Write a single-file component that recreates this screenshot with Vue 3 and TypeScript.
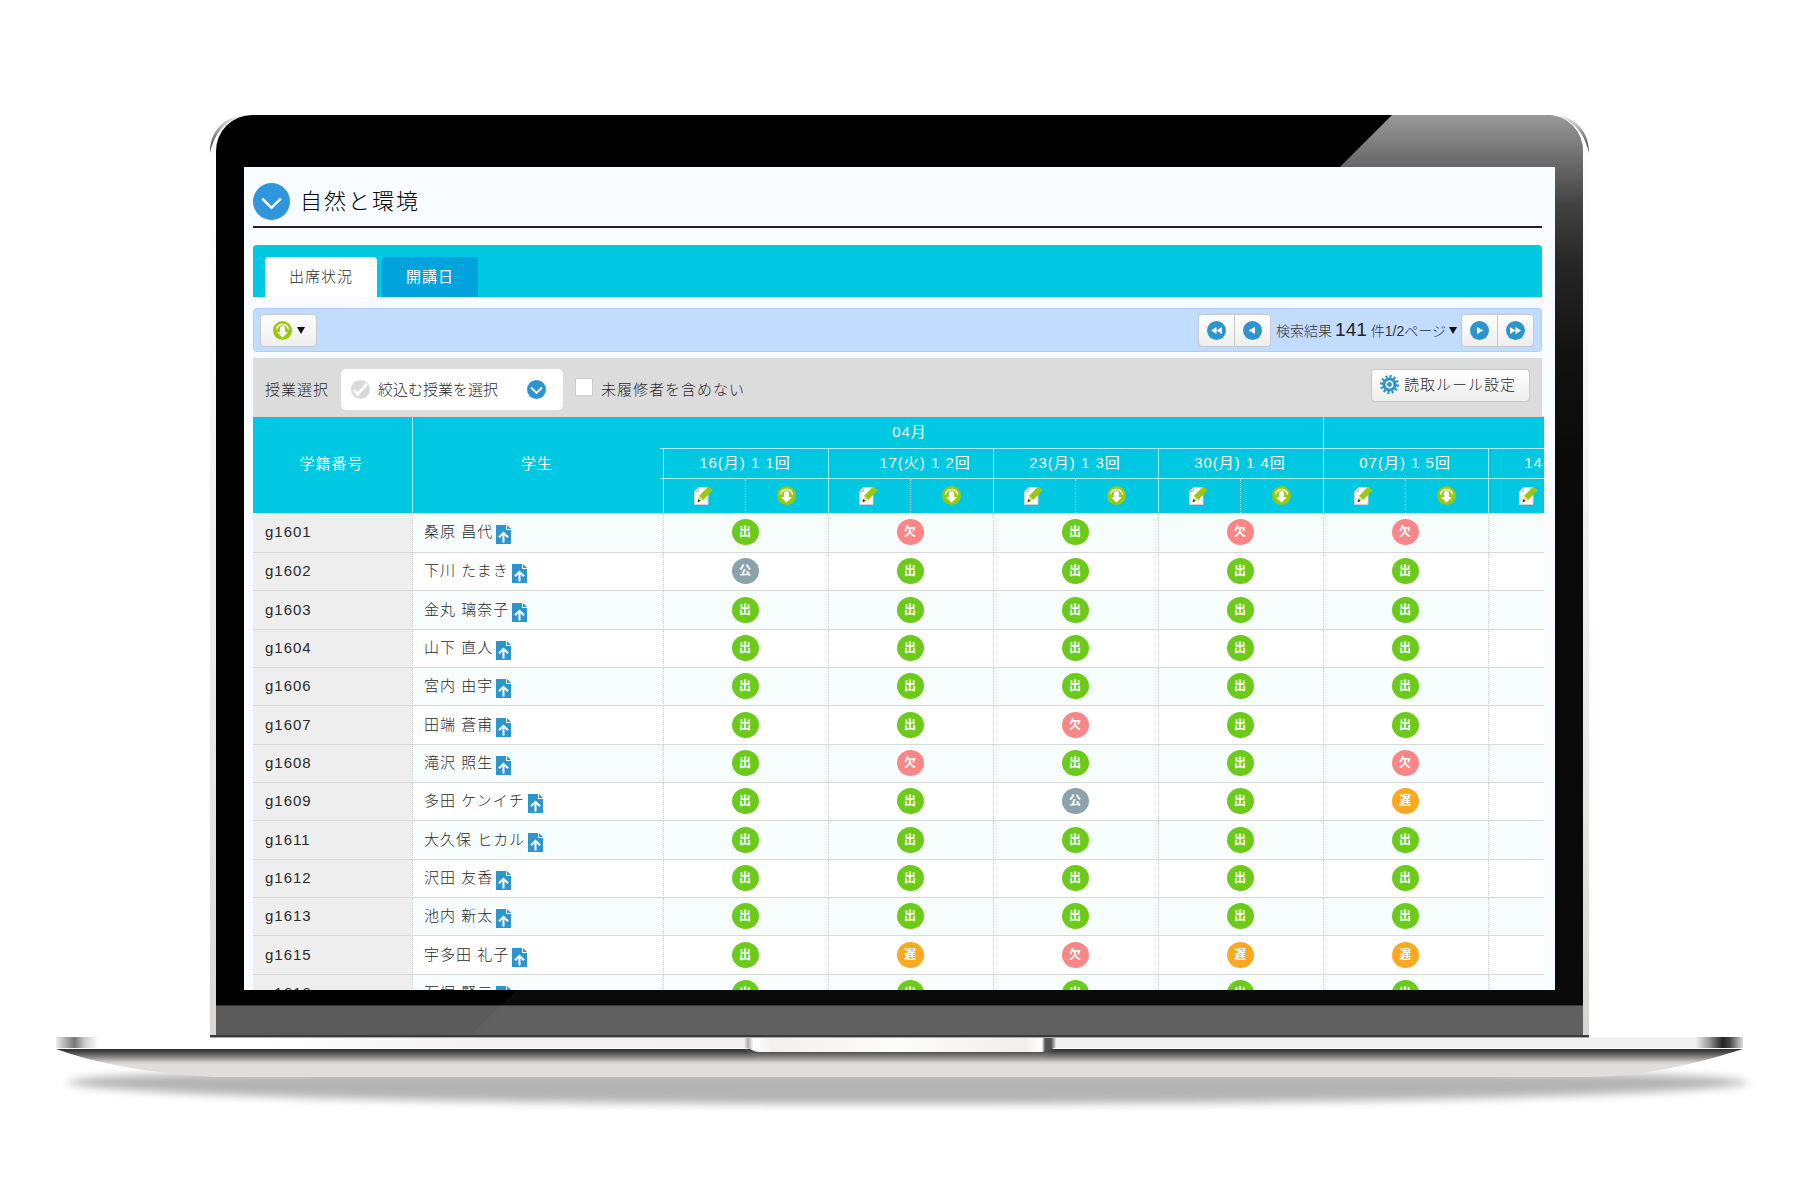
<script setup lang="ts">
type Mark = '出' | '欠' | '公' | '遅'

interface Student {
  id: string
  name: string
  marks: Mark[]
}

interface Session {
  label: string
  shifted?: boolean
}

const sessions: Session[] = [
  { label: '16(月) 1 1回' },
  { label: '17(火) 1 2回', shifted: true },
  { label: '23(月) 1 3回' },
  { label: '30(月) 1 4回' },
  { label: '07(月) 1 5回' },
  { label: '14(月) 1 6回' },
]

const markClass: Record<Mark, string> = {
  出: 'present',
  欠: 'absent',
  公: 'official',
  遅: 'late',
}

const row = (id: string, name: string, marks = '出出出出出'): Student => ({
  id,
  name,
  marks: marks.split('') as Mark[],
})

const students: Student[] = [
  row('g1601', '桑原 昌代', '出欠出欠欠'),
  row('g1602', '下川 たまき', '公出出出出'),
  row('g1603', '金丸 璃奈子'),
  row('g1604', '山下 直人'),
  row('g1606', '宮内 由宇'),
  row('g1607', '田端 蒼甫', '出出欠出出'),
  row('g1608', '滝沢 照生', '出欠出出欠'),
  row('g1609', '多田 ケンイチ', '出出公出遅'),
  row('g1611', '大久保 ヒカル'),
  row('g1612', '沢田 友香'),
  row('g1613', '池内 新太'),
  row('g1615', '宇多田 礼子', '出遅欠遅遅'),
  row('g1616', '石堀 賢二'),
]
</script>

<template>
  <main class="stage">
    <svg class="symbols" aria-hidden="true">
      <symbol id="i-download" viewBox="0 0 19 19">
        <circle cx="9.500" cy="9.500" r="9.500" fill="#98c90f" />
        <path d="M3.400 8.600a6.200 6.200 0 0 1 12.200 0" fill="none" stroke="#fff" stroke-width="1.400" />
        <path d="M6.900 7.600a2.600 2.600 0 0 1 5.200 0v3.600h2.800l-5.400 5.400-5.400-5.400h2.800z" fill="#fff" />
      </symbol>
      <symbol id="i-edit" viewBox="0 0 19 19">
        <path d="M4.500 1.500H14V18.500H.500V5.500z" fill="#fff" stroke="#d5cfcf" />
        <path d="M4.500 1.500v4h-4" fill="#eee" stroke="#c9c4c4" />
        <path d="M14.200.400l4.600 3.800-9.600 9.800-4.100-4.200z" fill="#98c90f" />
        <path d="M5.100 9.800l4.100 4.200-5.400 2.200z" fill="#fbd77a" />
        <path d="M4.400 13l2 2-2.800 1.200z" fill="#222" />
      </symbol>
      <symbol id="i-upload" viewBox="0 0 15 19">
        <path d="M0 0h10v5h5v14H0z" fill="#2d95cd" />
        <path d="M11 0l4 4h-4z" fill="#2d95cd" />
        <path d="M7.500 17.500V8M3 12.300l4.500-4.500 4.500 4.500" fill="none" stroke="#fff" stroke-width="2" />
      </symbol>
      <symbol id="i-chevron" viewBox="0 0 38 38">
        <circle cx="19" cy="19" r="19" fill="currentColor" />
        <path d="M9.500 16l9.500 9.500 9.500-9.500" fill="none" stroke="#fff" stroke-width="2.600" />
      </symbol>
      <symbol id="i-chevron-small" viewBox="0 0 19 19">
        <circle cx="9.500" cy="9.500" r="9.500" fill="#2d95cd" />
        <path d="M4 7.500l5.500 5.500L15 7.500" fill="none" stroke="#fff" stroke-width="1.800" />
      </symbol>
      <symbol id="i-check" viewBox="0 0 19 19">
        <circle cx="9.500" cy="9.500" r="9.500" fill="#d9d9d9" />
        <path d="M3 10.200l4 4 9-10.500" fill="none" stroke="#fff" stroke-width="2.800" />
      </symbol>
      <symbol id="i-prev" viewBox="0 0 19 19">
        <circle cx="9.500" cy="9.500" r="9.500" fill="#2d95cd" />
        <path d="M12 6v7L5.500 9.500z" fill="#fff" />
      </symbol>
      <symbol id="i-first" viewBox="0 0 19 19">
        <circle cx="9.500" cy="9.500" r="9.500" fill="#2d95cd" />
        <path d="M9.500 6v7L4 9.500zM15 6v7L9.500 9.500z" fill="#fff" />
      </symbol>
      <symbol id="i-gear" viewBox="0 0 19 19">
        <circle cx="9.500" cy="9.500" r="8" fill="none" stroke="#2d95cd" stroke-width="3" pathLength="24" stroke-dasharray="1 1" />
        <circle cx="9.500" cy="9.500" r="5.500" fill="none" stroke="#2d95cd" stroke-width="3.200" />
        <circle cx="9.500" cy="9.500" r="2.400" fill="#2d95cd" />
      </symbol>
      <symbol id="i-caret" viewBox="0 0 8 7">
        <path d="M0 0h8L4 7z" fill="#111" />
      </symbol>
    </svg>

    <div class="laptop">
      <div class="lid">
        <svg class="corner" viewBox="0 0 40 40" aria-hidden="true">
          <defs>
            <linearGradient id="edge" x1="0" y1="1" x2="1" y2="0">
              <stop offset="0" stop-color="#333" />
              <stop offset=".5" stop-color="#bbb" />
              <stop offset="1" stop-color="#fff" />
            </linearGradient>
          </defs>
          <path d="M0 38C0 16 14 0 38 0 19 3 5 15 0 38z" fill="url(#edge)" />
        </svg>
        <svg class="corner right" viewBox="0 0 40 40" aria-hidden="true">
          <path d="M0 38C0 16 14 0 38 0 19 3 5 15 0 38z" fill="url(#edge)" />
        </svg>
        <div class="bezel">
          <div class="screen">
            <header class="title">
              <svg class="title-icon"><use href="#i-chevron" /></svg>
              <h1>自然と環境</h1>
            </header>

            <nav class="tabs">
              <a href="#status" class="tab active">出席状況</a>
              <a href="#dates" class="tab">開講日</a>
            </nav>

            <div class="toolbar">
              <button type="button" class="btn menu" aria-label="ダウンロード">
                <svg class="icon"><use href="#i-download" /></svg>
                <svg class="caret"><use href="#i-caret" /></svg>
              </button>
              <div class="pager">
                <div class="pair">
                  <button type="button" class="btn" aria-label="最初"><svg class="icon"><use href="#i-first" /></svg></button>
                  <button type="button" class="btn" aria-label="前"><svg class="icon"><use href="#i-prev" /></svg></button>
                </div>
                <button type="button" class="result">
                  <span>検索結果</span><strong>141</strong><span>件1/2ページ</span>
                  <svg class="caret"><use href="#i-caret" /></svg>
                </button>
                <div class="pair">
                  <button type="button" class="btn" aria-label="次"><svg class="icon flip"><use href="#i-prev" /></svg></button>
                  <button type="button" class="btn" aria-label="最後"><svg class="icon flip"><use href="#i-first" /></svg></button>
                </div>
              </div>
            </div>

            <div class="filters">
              <label for="lesson">授業選択</label>
              <div class="picker">
                <svg class="icon"><use href="#i-check" /></svg>
                <select id="lesson">
                  <option>絞込む授業を選択</option>
                </select>
                <svg class="icon"><use href="#i-chevron-small" /></svg>
              </div>
              <label class="exclude"><input type="checkbox" />未履修者を含めない</label>
              <button type="button" class="btn rules">
                <svg class="icon"><use href="#i-gear" /></svg>読取ルール設定
              </button>
            </div>

            <div class="grid">
              <table>
                <colgroup>
                  <col class="c-id" />
                  <col class="c-name" />
                  <template v-for="s in sessions" :key="s.label">
                    <col class="c-edit" />
                    <col class="c-down" />
                  </template>
                </colgroup>
                <thead>
                  <tr class="months">
                    <th rowspan="3">学籍番号</th>
                    <th rowspan="3">学生</th>
                    <th colspan="8" class="april">04月</th>
                    <th colspan="4"></th>
                  </tr>
                  <tr class="dates">
                    <th v-for="s in sessions" :key="s.label" colspan="2" :class="{ shifted: s.shifted }">{{ s.label }}</th>
                  </tr>
                  <tr class="actions">
                    <template v-for="s in sessions" :key="s.label">
                      <th><button type="button" aria-label="編集"><svg class="icon"><use href="#i-edit" /></svg></button></th>
                      <th class="down"><button type="button" aria-label="ダウンロード"><svg class="icon"><use href="#i-download" /></svg></button></th>
                    </template>
                  </tr>
                </thead>
                <tbody>
                  <tr v-for="s in students" :key="s.id">
                    <td class="id">{{ s.id }}</td>
                    <td class="name">
                      <div><span>{{ s.name }}</span><svg class="upload"><use href="#i-upload" /></svg></div>
                    </td>
                    <td v-for="(m, i) in s.marks" :key="i" colspan="2" class="cell">
                      <span class="mark" :class="markClass[m]">{{ m }}</span>
                    </td>
                    <td colspan="2"></td>
                  </tr>
                </tbody>
              </table>
            </div>
          </div>
          <div class="chin"></div>
        </div>
        <div class="hinge"></div>
      </div>

      <svg class="base" viewBox="0 0 1687 80" aria-hidden="true">
        <defs>
          <linearGradient id="plate">
            <stop offset="0" stop-color="#eee" />
            <stop offset=".006" stop-color="#aaa" />
            <stop offset=".011" stop-color="#777" />
            <stop offset=".017" stop-color="#ccc" />
            <stop offset=".025" stop-color="#fff" />
            <stop offset=".12" stop-color="#fff" />
            <stop offset=".25" stop-color="#f3f1f2" />
            <stop offset=".972" stop-color="#f0f0f0" />
            <stop offset=".98" stop-color="#999" />
            <stop offset=".988" stop-color="#222" />
            <stop offset=".992" stop-color="#444" />
            <stop offset="1" stop-color="#ddd" />
          </linearGradient>
          <linearGradient id="belly" x1="0" y1="0" x2="0" y2="1">
            <stop offset="0" stop-color="#2c2c2c" />
            <stop offset=".12" stop-color="#4a4a49" />
            <stop offset=".3" stop-color="#8f8a88" />
            <stop offset=".48" stop-color="#d5cfcd" />
            <stop offset=".56" stop-color="#e1ddda" />
            <stop offset="1" stop-color="#e1ddda" />
          </linearGradient>
          <linearGradient id="lip" gradientUnits="userSpaceOnUse" x1="0" y1="14" x2="0" y2="26">
            <stop offset="0" stop-color="#444" />
            <stop offset="1" stop-color="#d5cfcd" />
          </linearGradient>
          <linearGradient id="notch">
            <stop offset="0" stop-color="#f3f1f2" />
            <stop offset=".013" stop-color="#aaa" />
            <stop offset=".03" stop-color="#fff" />
            <stop offset=".09" stop-color="#f3f1f0" />
            <stop offset=".5" stop-color="#fcfcfb" />
            <stop offset=".9" stop-color="#f1efee" />
            <stop offset=".955" stop-color="#fff" />
            <stop offset=".965" stop-color="#555" />
            <stop offset=".985" stop-color="#555" />
            <stop offset="1" stop-color="#e8e8e8" />
          </linearGradient>
          <filter id="soft" x="-5%" y="-60%" width="110%" height="220%">
            <feGaussianBlur stdDeviation="4.500" />
          </filter>
        </defs>
        <path d="M9 46C30 36 150 36 400 36h890c250 0 380 0 405 10-60 13-400 21-849 21S69 59 9 46z" fill="#b4b4b4" filter="url(#soft)" />
        <path d="M0 12h1687Q1600 40 1531 40H157Q60 34 0 12z" fill="url(#belly)" />
        <path d="M0 0h1687v11H0z" fill="url(#plate)" />
        <path d="M688 12h312l-12 9H700z" fill="url(#lip)" />
        <path d="M688 0h312v11c-6 0-6 4-14 4H704c-8 0-8-4-16-4z" fill="url(#notch)" />
      </svg>
    </div>
  </main>
</template>

<style>
body {
  margin: 0;
  background: #fff;
}
</style>

<style scoped>
* {
  box-sizing: border-box;
}

.stage {
  padding: 115px 57px 60px 56px;
  font: 15px/20px "Liberation Sans", "Noto Sans CJK JP", sans-serif;
  font-weight: 300;
  letter-spacing: 1px;
  color: #2a2a2a;
}

.symbols {
  position: absolute;
  width: 0;
  height: 0;
}

button,
select {
  margin: 0;
  padding: 0;
  border: 0;
  background: none;
  font: inherit;
  letter-spacing: inherit;
  color: inherit;
}

.lid {
  position: relative;
  margin: 0 154px;
  padding: 0 6px;
  border-radius: 40px 40px 0 0;
  background: linear-gradient(#fff, #fafafa 20%, #e6e3e3 75%, #d8d5d5);
}

.corner {
  position: absolute;
  top: 0;
  left: 0;
  width: 40px;
  height: 40px;
}

.corner.right {
  left: auto;
  right: 0;
  transform: scaleX(-1);
}

.bezel {
  position: relative;
  padding: 52px 28px 0;
  border-radius: 36px 36px 0 0;
  background: #000;
  overflow: hidden;
}

.bezel::before {
  content: "";
  position: absolute;
  inset: 0;
  background: linear-gradient(
    rgb(255 255 255 / 60%),
    rgb(255 255 255 / 40%) 52px,
    rgb(255 255 255 / 26%) 90px,
    rgb(255 255 255 / 15%) 150px,
    rgb(255 255 255 / 7%) 240px,
    rgb(255 255 255 / 4%) 340px
  );
  clip-path: polygon(calc(100% - 191px) 0, 100% 0, 100% 100%, calc(100% - 1112px) 100%);
}

.chin {
  height: 30px;
  margin: 15px -28px 0;
  border-top: 1px solid #333;
  background: rgb(100 100 100 / 90%);
}

.hinge {
  height: 3px;
  margin: 0 -6px;
  border-bottom: 1px solid #aaa;
  background: #3a3838;
}

.base {
  display: block;
  width: 100%;
  margin-top: -1px;
  overflow: visible;
}

.screen {
  position: relative;
  aspect-ratio: 1311 / 823;
  padding: 16px 11px 0 9px;
  background: #f8fbff;
  overflow: hidden;
}

.title,
.tabs,
.toolbar,
.filters {
  display: flex;
  margin-right: 2px;
}

.title {
  align-items: center;
  height: 45px;
  padding-bottom: 6px;
  gap: 10px;
  border-bottom: 2px solid #222;
}

.title-icon {
  width: 37px;
  height: 37px;
  color: #2f96dc;
}

h1 {
  margin: 0;
  font-size: 22px;
  line-height: 32px;
  font-weight: 300;
  letter-spacing: 2px;
  color: #000;
}

.tabs {
  gap: 5px;
  margin-top: 17px;
  padding: 12px 12px 0;
  border-radius: 4px 4px 0 0;
  background: #00c7e2;
}

.tab {
  padding: 10px 24px;
  border-radius: 4px 4px 0 0;
  background: #00a3dc;
  color: #fff;
  font-weight: 400;
  text-decoration: none;
}

.tab.active {
  background: #fff;
  color: #2a2a2a;
  font-weight: 300;
}

.toolbar {
  align-items: center;
  justify-content: space-between;
  height: 44px;
  margin-top: 11px;
  padding: 0 7px 0 6px;
  border: 1px solid #abcff8;
  border-radius: 4px;
  background: #c1dcff;
}

.btn {
  display: flex;
  align-items: center;
  justify-content: center;
  width: 37px;
  height: 33px;
  border: 1px solid #c8c8c8;
  border-radius: 4px;
  background: linear-gradient(#fff, #eee);
}

.icon {
  display: block;
  width: 19px;
  height: 19px;
}

.flip {
  transform: scaleX(-1);
}

.caret {
  width: 8px;
  height: 7px;
}

.menu {
  gap: 5px;
  width: 57px;
}

.pager,
.pair {
  display: flex;
}

.pair .btn:first-child {
  border-radius: 4px 0 0 4px;
}

.pair .btn:last-child {
  width: 36px;
  border-left: 0;
  border-radius: 0 4px 4px 0;
}

.result {
  display: flex;
  align-items: baseline;
  padding: 6px 4px 0 5px;
  font-size: 14px;
  letter-spacing: 0;
  color: #333;
}

.result strong {
  margin: 0 4px 0 3px;
  font-size: 19px;
  font-weight: 400;
  color: #222;
}

.result .caret {
  align-self: center;
  margin: 0 0 6px 3px;
}

.filters {
  align-items: center;
  height: 58px;
  margin-top: 6px;
  padding: 5px 12px 0;
  background: #dcdcdc;
}

.picker {
  display: flex;
  align-items: center;
  width: 222px;
  height: 41px;
  margin-left: 12px;
  padding: 0 17px 0 10px;
  border-radius: 5px;
  background: #fff;
}

.picker select {
  flex: 1;
  height: 32px;
  padding-left: 8px;
  appearance: none;
  letter-spacing: 0;
}

.exclude {
  display: flex;
  height: 24px;
  margin-left: 12px;
  gap: 8px;
  line-height: 24px;
}

.exclude input {
  width: 18px;
  height: 18px;
  margin: 0;
  border: 1px solid #ccc;
  background: #fff;
  appearance: none;
}

.rules {
  align-self: flex-start;
  justify-content: flex-start;
  width: 159px;
  margin: 6px 0 0 auto;
  padding: 0 0 2px 8px;
  gap: 5px;
}

.grid {
  overflow: hidden;
}

table {
  width: 1400px;
  border-top: 1px solid #eccfc9;
  border-spacing: 0;
  table-layout: fixed;
}

.c-id {
  width: 159px;
}

.c-name {
  width: 251px;
}

.c-edit {
  width: 82px;
}

.c-down {
  width: 83px;
}

th {
  position: relative;
  height: 31px;
  padding: 0 2px 2px 0;
  background: #00c7e2;
  color: #fff;
  font-weight: 400;
  border-left: 1px solid #9feaf4;
}

.months th:first-child,
.months .april {
  border-left: 0;
}

.months .april {
  padding-right: 167px;
}

.dates th {
  border-top: 1px solid #b5eff7;
  border-bottom: 1px solid #b5eff7;
}

.dates th:first-child::before {
  content: "";
  position: absolute;
  top: -1px;
  bottom: -1px;
  right: 100%;
  width: 4px;
  border-top: 1px solid #b5eff7;
  border-bottom: 1px solid #b5eff7;
}

.dates .shifted {
  padding-left: 30px;
}

.actions th {
  height: 34px;
}

.actions .down {
  border-left: 1px dotted #9feaf4;
}

.actions button {
  display: block;
  margin: 0 auto;
}

td {
  height: 38px;
  padding: 0 0 1px;
  border-bottom: 1px solid #d9d9d9;
  border-left: 1px dotted #d0d0d0;
  background: #fff;
}

tbody tr:nth-child(odd) td {
  background: #f7fdfd;
}

tbody tr:nth-child(3n) td {
  height: 39px;
}

tbody tr:first-child td {
  height: 40px;
}

tbody tr .id.id {
  padding-left: 12px;
  border-left: 0;
  background: #eee;
}

.cell {
  padding-right: 2px;
}

.name div {
  display: flex;
  align-items: center;
  gap: 3px;
  padding-left: 11px;
}

.upload {
  width: 15px;
  height: 19px;
  margin-top: 5px;
}

.mark {
  display: block;
  width: 27px;
  height: 26px;
  margin: 0 auto;
  border-radius: 50%;
  font-size: 12px;
  line-height: 26px;
  font-weight: 700;
  letter-spacing: 0;
  text-align: center;
  color: #fff;
}

.present {
  background: #6ccb1a;
}

.absent {
  background: #fb8687;
}

.official {
  background: #8ba2ab;
}

.late {
  background: #fca821;
}
</style>
